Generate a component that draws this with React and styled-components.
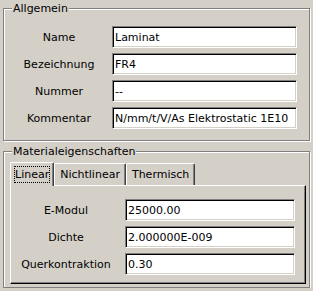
import styled, { createGlobalStyle } from 'styled-components';

const GlobalStyle = createGlobalStyle`
	html, body {
		margin: 0;
		background: #d4d0c8;
	}
	body {
		font-family: "DejaVu Sans", Verdana, sans-serif;
		font-size: 11px;
		color: #000;
	}
`;

const general = [
	{ label: 'Name', value: 'Laminat' },
	{ label: 'Bezeichnung', value: 'FR4' },
	{ label: 'Nummer', value: '--' },
	{ label: 'Kommentar', value: 'N/mm/t/V/As Elektrostatic 1E10' },
];

const linear = [
	{ label: 'E-Modul', value: '25000.00' },
	{ label: 'Dichte', value: '2.000000E-009' },
	{ label: 'Querkontraktion', value: '0.30' },
];

const tabs = ['Linear', 'Nichtlinear', 'Thermisch'];

function App() {
	return (
		<>
			<GlobalStyle />
			<Window>
				<Group $pad="11px 11px 11px 6px">
					<Legend>Allgemein</Legend>
					<Rows $labelWidth="98px">
						{general.map((row) => (
							<Row key={row.label}>
								<Label>{row.label}</Label>
								<Field defaultValue={row.value} $width="185px" />
							</Row>
						))}
					</Rows>
				</Group>
				<Group $pad="3px 3px 3px 6px" $top="4px">
					<Legend>Materialeigenschaften</Legend>
					<TabBar>
						{tabs.map((tab, i) => (
							<Tab key={tab} $active={i === 0}>
								<TabText $active={i === 0}>{tab}</TabText>
							</Tab>
						))}
					</TabBar>
					<Panel>
						<Rows $labelWidth="110px">
							{linear.map((row) => (
								<Row key={row.label}>
									<Label>{row.label}</Label>
									<Field defaultValue={row.value} $width="170px" />
								</Row>
							))}
						</Rows>
					</Panel>
				</Group>
			</Window>
		</>
	);
}

export default App;

const Window = styled.div`
	width: 307px;
	padding: 2px 3px 0 3px;
	display: flex;
	flex-direction: column;
`;

const Group = styled.fieldset`
	margin: ${(p) => p.$top || '0'} 0 0 0;
	padding: ${(p) => p.$pad};
	border: 1px solid #808080;
	box-shadow: inset 1px 1px 0 #fff, 1px 1px 0 #fff;
	min-width: 0;
`;

const Legend = styled.legend`
	padding: 0 1px;
	margin-left: 2px;
	line-height: 13px;
	background: #d4d0c8;
`;

const Rows = styled.div`
	display: grid;
	grid-template-columns: ${(p) => p.$labelWidth} auto;
	column-gap: 4px;
	row-gap: 5px;
`;

const Row = styled.div`
	display: contents;
`;

const Label = styled.span`
	text-align: center;
	align-self: center;
	line-height: 13px;
`;

const Field = styled.input`
	box-sizing: border-box;
	width: ${(p) => p.$width};
	height: 22px;
	margin: 0;
	padding: 0 2px;
	font: inherit;
	color: #000;
	background: #fff;
	border: 1px solid;
	border-color: #808080 #fff #fff #808080;
	box-shadow: inset 1px 1px 0 #000, inset -1px -1px 0 #d4d0c8;
	outline: none;
`;

const TabBar = styled.div`
	display: flex;
	align-items: flex-end;
	height: 24px;
	position: relative;
	z-index: 1;
`;

const Tab = styled.div`
	box-sizing: border-box;
	height: ${(p) => (p.$active ? '24px' : '22px')};
	margin-bottom: ${(p) => (p.$active ? '-1px' : '0')};
	padding: 0 ${(p) => (p.$active ? '3px' : '4px')};
	display: flex;
	align-items: center;
	background: #d4d0c8;
	border-top: 1px solid #fff;
	border-left: 1px solid #fff;
	border-right: 1px solid #404040;
	box-shadow: inset -1px 0 0 #808080;
	border-radius: 2px 2px 0 0;
`;

const TabText = styled.span`
	padding: 1px 1px;
	line-height: 15px;
	outline: ${(p) => (p.$active ? '1px dotted #000' : 'none')};
	outline-offset: -1px;
`;

const Panel = styled.div`
	box-sizing: border-box;
	width: 296px;
	height: 99px;
	padding: 13px 10px 0 0;
	border-top: 1px solid #fff;
	border-left: 1px solid #fff;
	border-right: 1px solid #000;
	border-bottom: 1px solid #000;
	box-shadow: inset -1px -1px 0 #808080;
`;
